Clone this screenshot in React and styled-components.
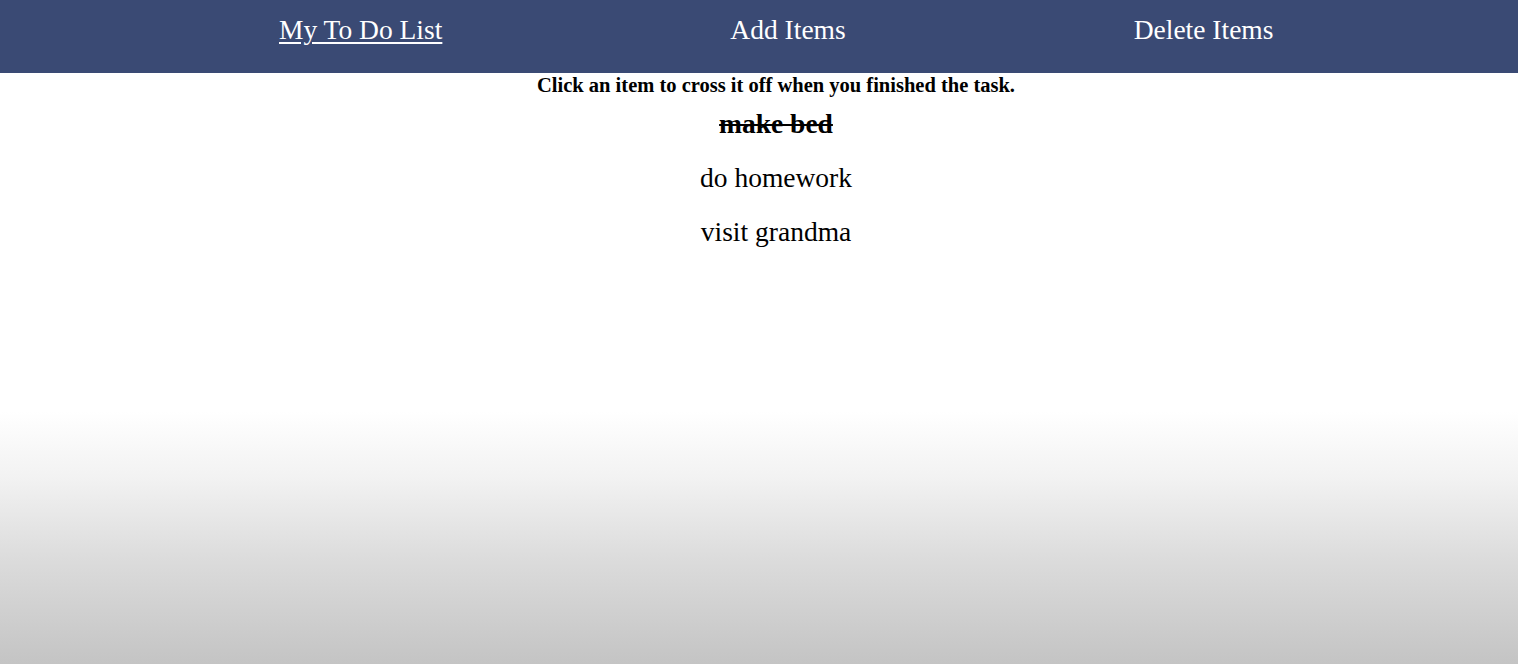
import React, { useState } from "react";
import styled, { createGlobalStyle } from "styled-components";

const GlobalStyle = createGlobalStyle`
  html, body {
    margin: 0;
    padding: 0;
  }
  body {
    font-family: "Liberation Serif", "Times New Roman", serif;
    min-height: 100vh;
    background: linear-gradient(to bottom, #ffffff 0%, #ffffff 62%, #f2f2f2 72%, #dcdcdc 84%, #c4c4c4 100%);
    background-attachment: fixed;
  }
`;

const NavBar = styled.nav`
  display: flex;
  align-items: center;
  box-sizing: border-box;
  height: 73px;
  padding: 0 0 13px 279px;
  gap: 288px;
  background-color: #3a4a74;
`;

const NavLink = styled.a`
  color: #ffffff;
  font-size: 27.5px;
  text-decoration: ${(props) => (props.active ? "underline" : "none")};
  text-underline-offset: 3px;
  cursor: pointer;
`;

const Main = styled.main`
  display: flex;
  flex-direction: column;
  align-items: center;
  padding-left: 34px;
`;

const Hint = styled.h4`
  margin: 1px 0 0;
  font-size: 20.5px;
  font-weight: 700;
  color: #000;
`;

const TodoList = styled.ul`
  list-style: none;
  margin: 12px 0 0;
  padding: 0;
  display: flex;
  flex-direction: column;
  align-items: center;
  gap: 24px;
`;

const TodoItem = styled.li`
  font-size: 27.5px;
  line-height: 30px;
  cursor: pointer;
  font-weight: ${(props) => (props.done ? 700 : 400)};
  text-decoration: ${(props) => (props.done ? "line-through" : "none")};
  text-decoration-thickness: 2px;
`;

const App = () => {
  const [items, setItems] = useState([
    { id: 1, text: "make bed", done: true },
    { id: 2, text: "do homework", done: false },
    { id: 3, text: "visit grandma", done: false },
  ]);

  const toggle = (id) =>
    setItems(items.map((i) => (i.id === id ? { ...i, done: !i.done } : i)));

  return (
    <>
      <GlobalStyle />
      <NavBar>
        <NavLink active>My To Do List</NavLink>
        <NavLink>Add Items</NavLink>
        <NavLink>Delete Items</NavLink>
      </NavBar>
      <Main>
        <Hint>Click an item to cross it off when you finished the task.</Hint>
        <TodoList>
          {items.map((item) => (
            <TodoItem key={item.id} done={item.done} onClick={() => toggle(item.id)}>
              {item.text}
            </TodoItem>
          ))}
        </TodoList>
      </Main>
    </>
  );
};

export default App;
